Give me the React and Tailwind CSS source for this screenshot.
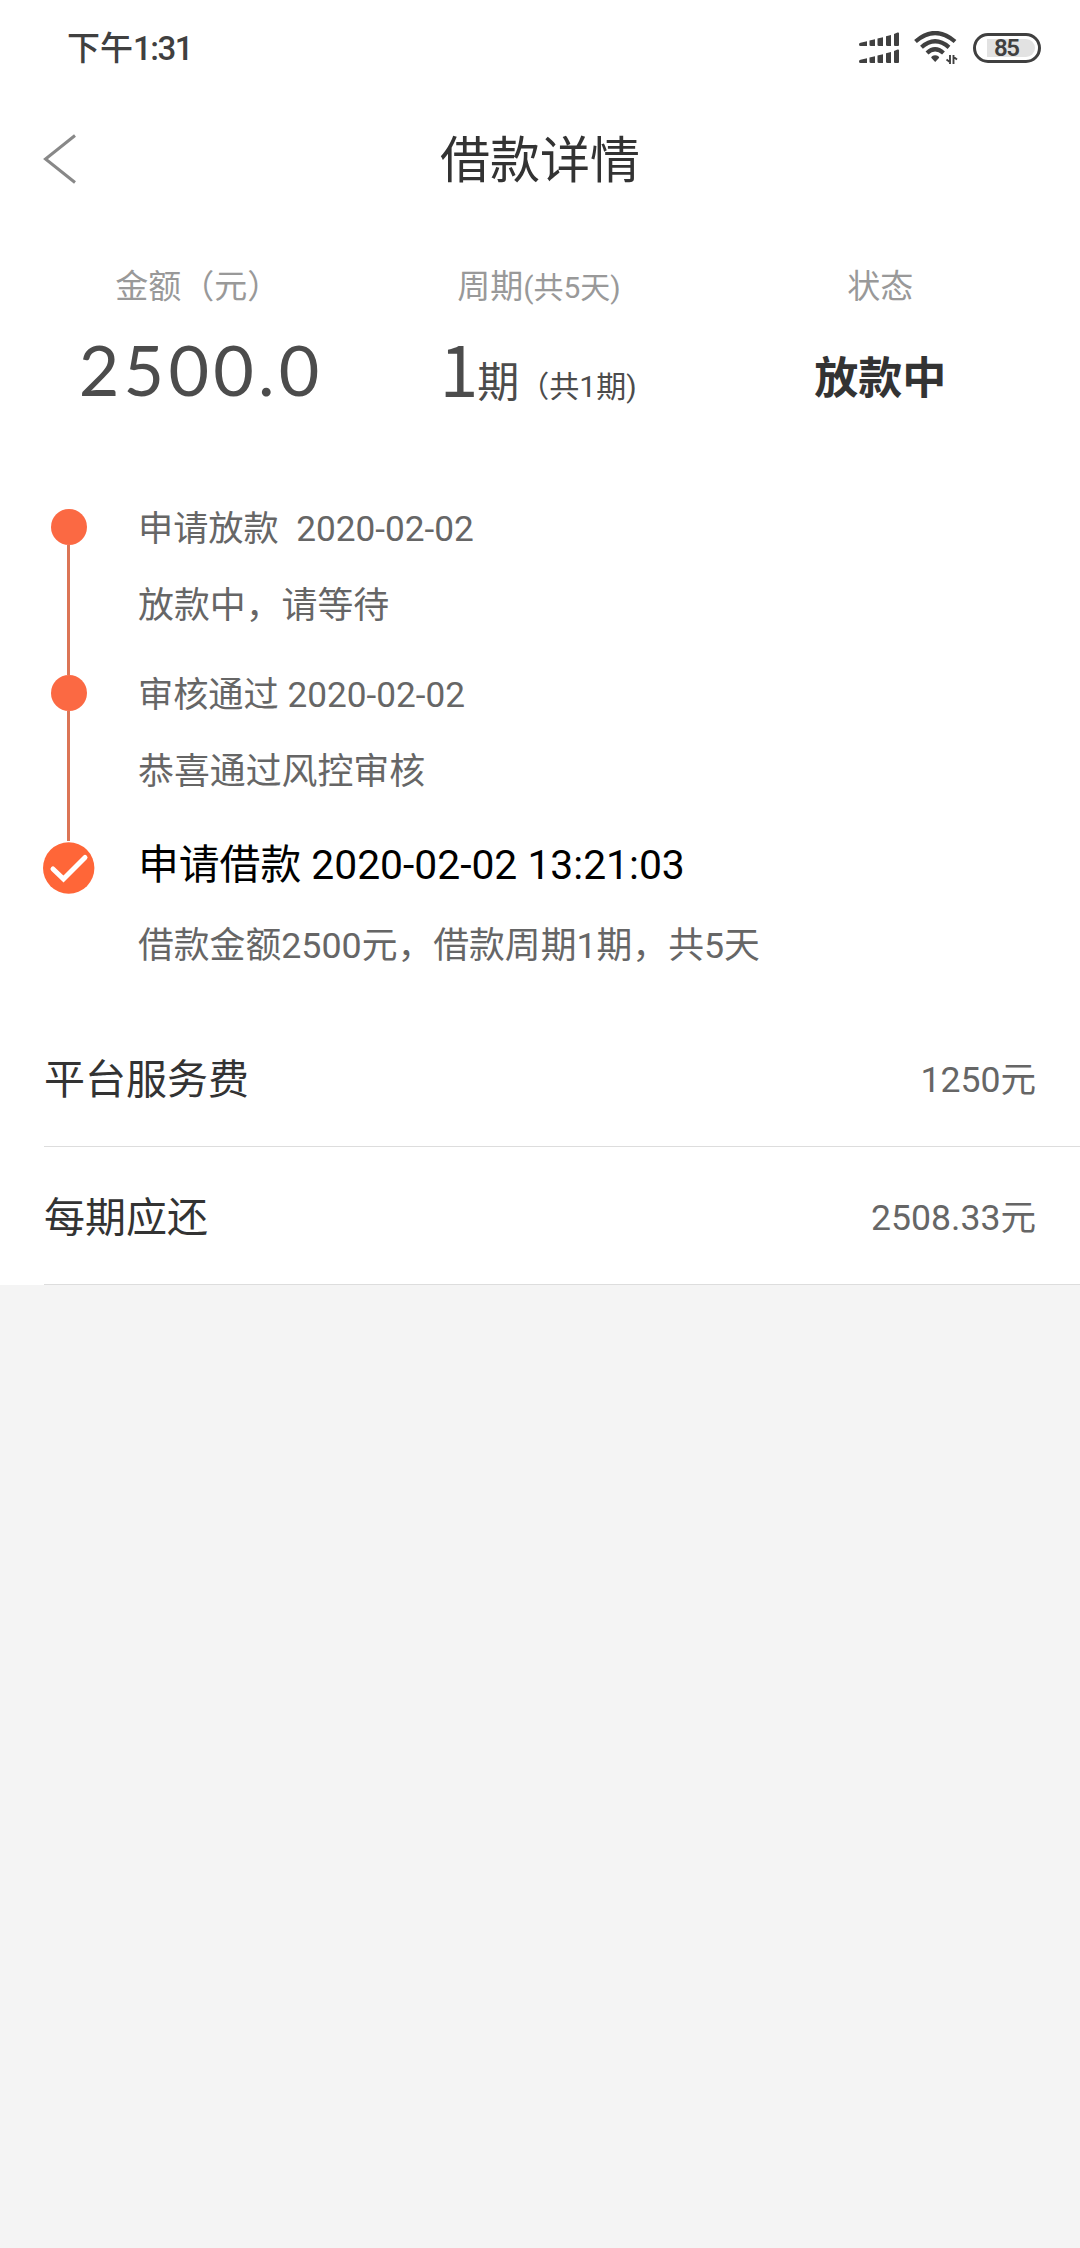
import React from "react"

const steps = [
  {
    title: "申请放款  2020-02-02",
    desc: "放款中，请等待",
  },
  {
    title: "审核通过 2020-02-02",
    desc: "恭喜通过风控审核",
  },
  {
    title: "申请借款 2020-02-02 13:21:03",
    desc: "借款金额2500元，借款周期1期，共5天",
    current: true,
  },
]

const fees = [
  { label: "平台服务费", value: "1250元" },
  { label: "每期应还", value: "2508.33元" },
]

const SignalIcon = () => (
  <svg className="w-[41px] h-[32px]" viewBox="0 0 41 32" fill="#404040">
    <path d="M0 12.5Q0 11 1.500 10.700L8 9.300V14H1.500Q0 14 0 12.500Z" />
    <path d="M10.500 8.500L16 7.200V14H12Q10.500 14 10.500 13Z" />
    <path d="M18.500 6.400L24 5.200V14H20Q18.500 14 18.500 13Z" />
    <path d="M27 4.200L32 3V14H28.500Q27 14 27 13Z" />
    <path d="M35 2L38.500 .5Q40 0 40 1.500V13Q40 14 39 14H36Q35 14 35 13Z" />
    <path d="M0 29.500Q0 28 1.500 27.700L8 26.300V31H1.500Q0 31 0 29.500Z" />
    <path d="M10.500 25.500L16 24.200V31H12Q10.500 31 10.500 30Z" />
    <path d="M18.500 23.400L24 22.200V31H20Q18.500 31 18.500 30Z" />
    <path d="M27 21.200L32 20V31H28.500Q27 31 27 30Z" />
    <path d="M35 19L38.500 17.500Q40 17 40 18.500V30Q40 31 39 31H36Q35 31 35 30Z" />
  </svg>
)

const WifiIcon = () => (
  <svg className="w-[44px] h-[34px]" viewBox="0 0 44 34" fill="none" stroke="#404040">
    <path d="M1.500 10.500Q21 -6.500 41 10.500" strokeWidth="4.200" />
    <path d="M7.500 16.300Q21 4.300 35 16.300" strokeWidth="4.200" />
    <path d="M13 22Q21 14.500 29.500 22" strokeWidth="4.200" />
    <path d="M21.200 31L17.200 26.800Q17.500 24.300 21.200 24.300Q24.800 24.300 25.200 26.800Z" fill="#404040" stroke="none" />
    <path d="M36 24V33M39.500 24V33M36.500 31.500L32.500 28.500M39 25.500L43 28.500" strokeWidth="1.900" />
  </svg>
)

const StatusBar = () => (
  <div className="flex h-24 items-center justify-between pl-[67px] pr-[39px] text-[#404040]">
    <div className="text-[33px] font-medium leading-none">
      下午<span className="tracking-[-1.5px]">1:31</span>
    </div>
    <div className="flex items-center">
      <SignalIcon />
      <div className="ml-[14px]">
        <WifiIcon />
      </div>
      <div className="ml-[15px] flex h-[30px] w-[68px] items-center rounded-full border-[3px] border-[#404040]">
        <div className="ml-[11px] flex h-[18px] w-[48px] items-center rounded-r-full bg-[#e2e2e2] pl-[7px] text-[24px] font-semibold leading-none tracking-[-1.5px]">
          85
        </div>
      </div>
    </div>
  </div>
)

const Header = () => (
  <div className="flex h-[126px] items-center px-[43px] text-[#333]">
    <svg className="h-[50px] w-[36px]" viewBox="0 0 36 50" fill="none" stroke="#888" strokeWidth="3">
      <path d="M32 1.500L2.500 25L32 48.500" />
    </svg>
    <h1 className="flex-1 pt-1 pr-[36px] text-center text-[50px] leading-none">借款详情</h1>
  </div>
)

const Summary = () => (
  <div className="grid h-[287px] grid-cols-3 pl-[27px] pr-[29px] pt-10 text-center text-[#999]">
    <div>
      <div className="text-[33px] leading-[50px]">金额（元）</div>
      <div className="mt-[12px] pl-[7px] font-[Lato,'Noto_Sans_CJK_SC',sans-serif] text-[70px] leading-[90px] tracking-[4.2px] text-[#4c4c4c]">
        2500.0
      </div>
    </div>
    <div>
      <div className="text-[33px] leading-[50px]">
        周期<span className="text-[30px]">(共5天)</span>
      </div>
      <div className="mt-[9px] pl-[2px] font-['Noto_Sans_CJK_SC',sans-serif] text-[70px] leading-[90px] text-[#4c4c4c]">
        <span className="-ml-1 mr-[-1px]">1</span>
        <span className="text-[42px]">期</span>
        <span className="font-[Roboto,'Noto_Sans_CJK_SC',sans-serif] text-[30px]">（共1期)</span>
      </div>
    </div>
    <div>
      <div className="text-[33px] leading-[50px]">状态</div>
      <div className="mt-[22px] text-[44px] font-bold leading-[90px] text-[#333]">放款中</div>
    </div>
  </div>
)

const CheckIcon = () => (
  <svg className="mt-px h-[52px] w-[52px]" viewBox="0 0 52 52" fill="none">
    <circle cx="25.700" cy="26" r="25.700" fill="#ff6638" />
    <path d="M10 27L20.500 37L42 15.500" stroke="#fff" strokeWidth="5" strokeLinecap="round" />
  </svg>
)

const Step = ({ title, desc, current }) => (
  <div className={current ? "flex h-[168px]" : "flex h-[166px]"}>
    <div className="flex w-[52px] flex-col items-center">
      {current ? (
        <CheckIcon />
      ) : (
        <>
          <div className="size-9 rounded-full bg-[#fb6943]" />
          <div className="mr-px w-[3px] flex-1 bg-[#dc7556]" />
        </>
      )}
    </div>
    <div className="ml-[43px] whitespace-pre text-[#666]">
      {current ? (
        <>
          <div className="text-[40.8px] leading-[48px] text-black">{title}</div>
          <div className="mt-[37px] text-[35.8px] leading-[40px]">{desc}</div>
        </>
      ) : (
        <>
          <div className="pt-px text-[35.2px] leading-[38px]">{title}</div>
          <div className="mt-[39px] text-[35.9px] leading-[38px]">{desc}</div>
        </>
      )}
    </div>
  </div>
)

const App = () => {
  return (
    <div className="min-h-[2248px] w-[1080px] bg-[#f4f4f4] font-[Roboto,'Noto_Sans_CJK_SC',sans-serif]">
      <div className="bg-white">
        <StatusBar />
        <Header />
        <Summary />
        <div className="pl-[43px]">
          {steps.map((step) => (
            <Step key={step.title} {...step} />
          ))}
        </div>
        <div className="pl-[44px]">
          {fees.map(({ label, value }) => (
            <div
              key={label}
              className="flex h-[138px] items-center justify-between border-b border-[#ddd] pt-[5px] pr-[44px]"
            >
              <span className="text-[41px] leading-none text-[#333]">{label}</span>
              <span className="pt-0.5 text-[35.6px] leading-none text-[#666]">{value}</span>
            </div>
          ))}
        </div>
      </div>
    </div>
  )
}

export default App
